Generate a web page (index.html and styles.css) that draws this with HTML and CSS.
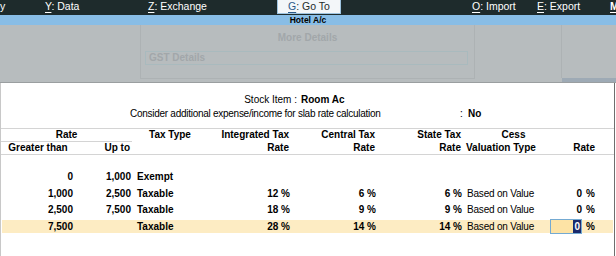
FILE: index.html
```html
<!DOCTYPE html>
<html lang="en">
<head>
    <meta charset="UTF-8">
    <title>Hotel A/c - Stock Item</title>
    <link rel="stylesheet" href="styles.css">
</head>
<body>
    <div class="topbar">
        <span class="menu m-company">y</span>
        <span class="menu m-data"><u>Y</u>: Data</span>
        <span class="menu m-exchange"><u>Z</u>: Exchange</span>
        <span class="menu m-goto"><u>G</u>: Go To</span>
        <span class="menu m-import"><u>O</u>: Import</span>
        <span class="menu m-export"><u>E</u>: Export</span>
        <span class="menu m-more"><u>M</u></span>
    </div>
    <div class="titlebar">Hotel A/c</div>

    <div class="backdrop">
        <div class="bd-left"></div>
        <div class="bd-panel">
            <div class="bd-title">More Details</div>
            <div class="bd-field">GST Details</div>
        </div>
        <div class="bd-mid"></div>
        <div class="bd-right"></div>
    </div>

    <div class="main">
        <div class="info">
            <div class="info-row stock">
                <span class="lbl">Stock Item :</span>
                <span class="val">Room Ac</span>
            </div>
            <div class="info-row consider">
                <span class="lbl">Consider additional expense/income for slab rate calculation</span>
                <span class="colon">:</span>
                <span class="val">No</span>
            </div>
        </div>

        <div class="thead">
            <div class="h-rate">Rate</div>
            <div class="h-type">Tax Type</div>
            <div class="h-num">Integrated Tax</div>
            <div class="h-num">Central Tax</div>
            <div class="h-num">State Tax</div>
            <div class="h-cess">Cess</div>

            <div class="h-gt">Greater than</div>
            <div class="h-upto">Up to</div>
            <div></div>
            <div class="h-num">Rate</div>
            <div class="h-num">Rate</div>
            <div class="h-num">Rate</div>
            <div class="h-val">Valuation Type</div>
            <div class="h-cessrate">Rate</div>
        </div>

        <div class="rows">
            <div class="row">
                <div class="num">0</div>
                <div class="num">1,000</div>
                <div class="type">Exempt</div>
                <div></div><div></div><div></div><div></div><div></div><div></div>
            </div>
            <div class="row">
                <div class="num">1,000</div>
                <div class="num">2,500</div>
                <div class="type">Taxable</div>
                <div class="num">12 %</div>
                <div class="num">6 %</div>
                <div class="num">6 %</div>
                <div class="valtype">Based on Value</div>
                <div class="num">0</div>
                <div class="pct">%</div>
            </div>
            <div class="row">
                <div class="num">2,500</div>
                <div class="num">7,500</div>
                <div class="type">Taxable</div>
                <div class="num">18 %</div>
                <div class="num">9 %</div>
                <div class="num">9 %</div>
                <div class="valtype">Based on Value</div>
                <div class="num">0</div>
                <div class="pct">%</div>
            </div>
            <div class="row current">
                <div class="num">7,500</div>
                <div class="num"></div>
                <div class="type">Taxable</div>
                <div class="num">28 %</div>
                <div class="num">14 %</div>
                <div class="num">14 %</div>
                <div class="valtype">Based on Value</div>
                <div class="num edit"><span class="sel">0</span></div>
                <div class="pct">%</div>
            </div>
        </div>
    </div>
</body>
</html>
```

FILE: styles.css
```css
body {
    margin: 0;
    width: 616px;
    height: 256px;
    overflow: hidden;
    background-color: #fff;
    font-family: "Liberation Sans", Arial, sans-serif;
    font-size: 10px;
    color: #000;
}

/* top menu bar */
.topbar {
    display: flex;
    height: 15px;
    background-color: #1e2b2c;
    color: #fff;
    font-size: 10.5px;
    line-height: 13px;
}
.menu {
    flex: none;
    white-space: nowrap;
}
.menu u {
    text-underline-offset: 2px;
}
.m-company { width: 45px; }
.m-data { width: 103px; }
.m-exchange { width: 129px; }
.m-goto {
    width: 52px;
    height: 13px;
    padding-left: 10px;
    background-color: #f3f6f9;
    color: #1e2b2c;
    border: 1px solid #9fc4e0;
    border-top: none;
    margin-right: 131px;
}
.m-goto u {
    color: #2c5a8a;
}
.m-import { width: 65px; }
.m-export { width: 73px; }
.m-more { font-weight: bold; }

.titlebar {
    height: 10px;
    background-color: #88bde6;
    text-align: center;
    font-weight: bold;
    font-size: 8.5px;
    line-height: 10px;
}

/* dimmed screen behind */
.backdrop {
    display: flex;
    height: 57px;
    background-color: #b7bcbe;
    border-bottom: 1px solid #9a9ea0;
}
.bd-left {
    width: 140px;
}
.bd-panel {
    width: 333px;
    height: 53px;
    border: 1px solid #adb2b4;
    border-top: none;
}
.bd-title {
    padding-top: 6px;
    text-align: center;
    font-weight: bold;
    color: #a2a7aa;
    line-height: 13px;
}
.bd-field {
    margin: 7px 0 0 4px;
    width: 318px;
    height: 12px;
    padding-left: 3px;
    border: 1px solid #a9babe;
    font-weight: bold;
    color: #a2a7aa;
    line-height: 12px;
}
.bd-mid {
    width: 86px;
    border-right: 1px solid #adb2b4;
    height: 53px;
}
.bd-right {
    flex: 1;
    align-self: flex-end;
    height: 4px;
    background-color: #9eaab5;
}

/* report area */
.main {
    height: 173px;
    border-left: 1px solid #c8c8c8;
    border-right: 1px solid #6e6e6e;
    width: 613px;
}
.info {
    padding: 10px 0 7px;
    border-bottom: 1px solid #d4d4d4;
}
.info-row {
    display: flex;
    height: 14px;
    line-height: 14px;
}
.stock .lbl {
    width: 296px;
    text-align: right;
}
.stock .val {
    margin-left: 4px;
    font-weight: bold;
}
.consider {
    padding-left: 129px;
}
.consider .lbl {
    width: 330px;
    letter-spacing: -0.27px;
}
.consider .colon {
    width: 8px;
}
.consider .val {
    font-weight: bold;
}

.thead, .row {
    display: grid;
    grid-template-columns: 71px 58px 80px 79px 86px 86px 88px 32px 19px;
}
.thead {
    grid-template-rows: 13px 12px;
    font-weight: bold;
    line-height: 12px;
    border-bottom: 1px solid #d4d4d4;
}
.h-rate {
    grid-column: 1 / 3;
    text-align: center;
    border-bottom: 1px solid #d4d4d4;
    margin-right: -2px;
}
.h-type {
    text-align: center;
}
.h-num {
    text-align: right;
}
.h-cess {
    grid-column: 7 / 10;
    text-align: center;
    padding-right: 34px;
}
.h-gt {
    text-align: center;
    padding-left: 3px;
}
.h-upto {
    text-align: right;
}
.h-val {
    padding-left: 5px;
}
.h-cessrate {
    grid-column: 8 / 10;
    text-align: right;
    padding-right: 5px;
}

.rows {
    padding-top: 15px;
}
.row {
    height: 13px;
    line-height: 13px;
    margin: 0 1px 3.6px;
    font-weight: bold;
}
.row .num {
    text-align: right;
}
.row .type {
    padding-left: 6px;
}
.row .valtype {
    padding-left: 5px;
    font-weight: normal;
    letter-spacing: -0.2px;
}
.row .pct {
    padding-left: 4px;
}
.row.current {
    background-color: #fdecc3;
}
.edit {
    box-sizing: border-box;
    height: 15px;
    margin-top: -1px;
    border: 1px solid #74aad2;
    background-color: #fde3a5;
    line-height: 13px;
}
.sel {
    display: inline-block;
    background-color: #1a2a6c;
    color: #fff;
    padding: 0 1px;
}
```
